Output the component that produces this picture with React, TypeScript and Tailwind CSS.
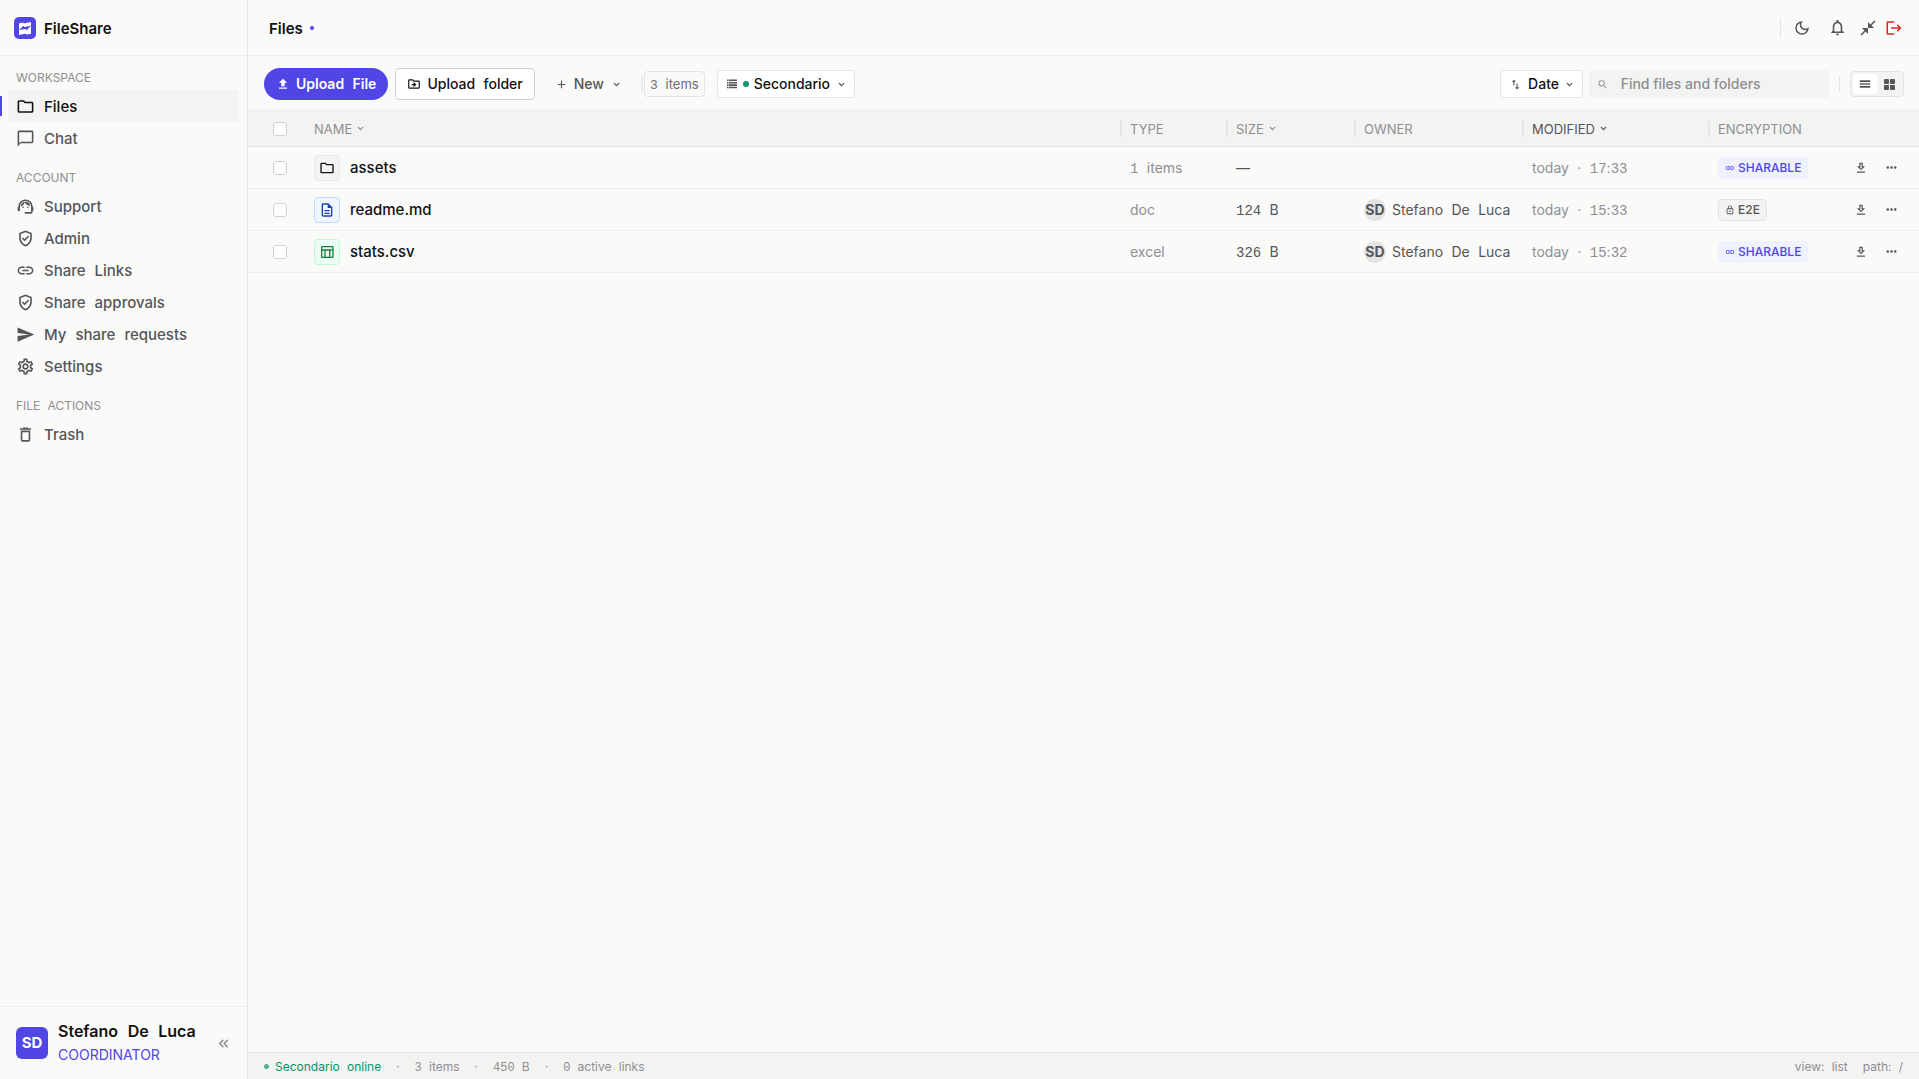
import type { ReactNode } from "react";
import { ChevronDown, ChevronsLeft } from "lucide-react";
import type { IconType } from "react-icons";
import {
  MdAdd,
  MdCloseFullscreen,
  MdDeleteOutline,
  MdImportExport,
  MdInsertLink,
  MdLogout,
  MdMenu,
  MdMoreHoriz,
  MdOutlineChatBubbleOutline,
  MdOutlineDarkMode,
  MdOutlineDescription,
  MdOutlineDriveFileMove,
  MdOutlineFolder,
  MdOutlineGetApp,
  MdOutlineGppGood,
  MdOutlineLock,
  MdOutlineNotifications,
  MdOutlineSettings,
  MdOutlineSupportAgent,
  MdOutlineTableChart,
  MdSearch,
  MdSend,
  MdUpload,
} from "react-icons/md";

// Digits and spaces are set in the mono face, letters in the sans one.
const Mixed = ({ text }: { text: string }) => (
  <span className="whitespace-pre">
    {text.split(/([\d ]+)/).map((part, i) =>
      i % 2 ? (
        <span key={i} className="font-['Liberation_Mono'] leading-none">
          {part}
        </span>
      ) : (
        part
      )
    )}
  </span>
);

type NavEntry = { label: string; icon: IconType; active?: boolean };

const sections: { title: string; items: NavEntry[] }[] = [
  {
    title: "WORKSPACE",
    items: [
      { label: "Files", icon: MdOutlineFolder, active: true },
      { label: "Chat", icon: MdOutlineChatBubbleOutline },
    ],
  },
  {
    title: "ACCOUNT",
    items: [
      { label: "Support", icon: MdOutlineSupportAgent },
      { label: "Admin", icon: MdOutlineGppGood },
      { label: "Share Links", icon: MdInsertLink },
      { label: "Share approvals", icon: MdOutlineGppGood },
      { label: "My share requests", icon: MdSend },
      { label: "Settings", icon: MdOutlineSettings },
    ],
  },
  {
    title: "FILE ACTIONS",
    items: [{ label: "Trash", icon: MdDeleteOutline }],
  },
];

const files = [
  {
    name: "assets",
    icon: MdOutlineFolder,
    tile: "border-[#e8e8e6] bg-[#f3f3f2] text-[#111]",
    type: "1 items",
    size: "—",
    owner: "",
    modified: "today · 17:33",
    sharable: true,
  },
  {
    name: "readme.md",
    icon: MdOutlineDescription,
    tile: "border-[#bfdbfe] bg-[#eff6ff] text-[#1e40af]",
    type: "doc",
    size: "124 B",
    owner: "Stefano De Luca",
    modified: "today · 15:33",
    sharable: false,
  },
  {
    name: "stats.csv",
    icon: MdOutlineTableChart,
    tile: "border-[#bbf7d0] bg-[#ecfdf5] text-[#15803d]",
    type: "excel",
    size: "326 B",
    owner: "Stefano De Luca",
    modified: "today · 15:32",
    sharable: true,
  },
];

const Logo = () => (
  <svg width="22" height="22" viewBox="0 0 22 22" aria-hidden="true">
    <rect width="22" height="22" rx="5" fill="#4f46e5" />
    <path d="M5 7Q5 6 6 5.900L9.500 5.500V6.500L17 5V16.500Q17 17 16.400 17.100L12 17.500V16.500L5 18z" fill="#fff" />
    <path d="M5 12.900L9.500 8.800L10.600 10.100L17 8.700L12.600 13.300L11.400 11.900z" fill="#4f46e5" />
  </svg>
);

const Sidebar = () => (
  <aside className="flex w-[248px] shrink-0 flex-col border-r border-[#e4e4e2]">
    <div className="flex h-14 items-center gap-2 border-b border-[#ececea] px-3.5 text-[15px] leading-6 font-semibold text-[#111]">
      <Logo />
      <span className="pt-0.5">FileShare</span>
    </div>
    <nav className="flex flex-1 flex-col gap-3 pt-2.5">
      {sections.map((section) => (
        <div key={section.title}>
          <h2 className="flex h-6 items-center px-4 text-[12px] leading-4 text-[#8e8e93]">
            <Mixed text={section.title} />
          </h2>
          <ul>
            {section.items.map(({ label, icon: Icon, active }) => (
              <li key={label} className="relative px-2">
                {active && <span className="absolute top-1.5 left-0 h-5 w-0.5 bg-[#4f46e5]" />}
                <a
                  href="#"
                  className={`flex h-8 items-center gap-[9px] rounded px-2 text-[15px] leading-6 font-medium ${
                    active ? "bg-[#f3f3f2] text-[#111]" : "text-[#55555a]"
                  }`}
                >
                  <Icon size={19} />
                  <span className="pt-0.5">
                    <Mixed text={label} />
                  </span>
                </a>
              </li>
            ))}
          </ul>
        </div>
      ))}
    </nav>
    <div className="flex h-[73px] items-center gap-2.5 border-t border-[#ececea] px-4">
      <span className="flex size-8 items-center justify-center rounded-md bg-[#4f46e5] text-[15px] font-bold text-white">
        SD
      </span>
      <div className="flex-1">
        <p className="text-[16px] leading-6 font-semibold text-[#111]">
          <Mixed text="Stefano De Luca" />
        </p>
        <p className="text-[14px] leading-6 text-[#4f46e5]">COORDINATOR</p>
      </div>
      <button aria-label="Collapse sidebar" className="text-[#8e8e93]">
        <ChevronsLeft size={15} strokeWidth={2.5} />
      </button>
    </div>
  </aside>
);

const Header = () => (
  <header className="flex h-14 shrink-0 items-center border-b border-[#ececea] pr-4 pl-[21px]">
    <h1 className="pt-0.5 text-[15px] leading-6 font-semibold text-[#111]">Files</h1>
    <span className="ml-[7px] size-1 rounded-full bg-[#4f46e5]" />
    <div className="ml-auto flex items-center text-[#55555a]">
      <span className="mr-3 h-5 w-px bg-[#e4e4e2]" />
      <button aria-label="Dark mode" className="mr-[17px]">
        <MdOutlineDarkMode size={18} />
      </button>
      <button aria-label="Notifications" className="mr-3">
        <MdOutlineNotifications size={19} />
      </button>
      <button aria-label="Compact layout" className="mr-2">
        <MdCloseFullscreen size={18} />
      </button>
      <button aria-label="Log out" className="text-[#dc2626]">
        <MdLogout size={18} />
      </button>
    </div>
  </header>
);

const Chevron = ({ className }: { className?: string }) => (
  <ChevronDown size={9} strokeWidth={3.5} className={className} />
);

const Toolbar = () => (
  <div className="flex h-[54px] shrink-0 items-center pt-0.5 pr-[15px] pl-4 text-[14px] leading-5 font-medium text-[#111]">
    <button className="flex h-8 items-center gap-1.5 rounded-full bg-[#4f46e5] px-3 font-semibold text-white">
      <MdUpload size={14} />
      <Mixed text="Upload File" />
    </button>
    <button className="ml-[7px] flex h-8 items-center gap-1.5 rounded border border-[#d0d0ce] bg-white px-[11px]">
      <MdOutlineDriveFileMove size={14} />
      <Mixed text="Upload folder" />
    </button>
    <button className="ml-5 flex h-8 items-center gap-1.5 text-[#55555a]">
      <MdAdd size={13} />
      New
      <Chevron className="ml-0.5" />
    </button>
    <span className="ml-5 h-4 w-0.5 bg-[#ececea]" />
    <span className="ml-px flex h-[26px] items-center rounded border border-[#e4e4e2] px-[5px] text-[13px] font-normal text-[#6e6e73]">
      <Mixed text="3 items" />
    </span>
    <button className="ml-3 flex h-7 items-center gap-[5px] rounded border border-[#e4e4e2] bg-white px-2">
      <svg width="12" height="12" viewBox="0 0 12 12" fill="#55555a">
        <path d="M1 1.500h1.500v1.600H1zM3 1.500h8v1.600H3zM1 3.900h1.500v1.600H1zM3 3.900h8v1.600H3zM1 6.300h1.500v1.600H1zM3 6.300h8v1.600H3zM1 8.700h1.500v1.600H1zM3 8.700h8v1.600H3z" />
      </svg>
      <span className="size-1.5 rounded-full bg-[#059669]" />
      Secondario
      <Chevron className="ml-0.5 text-[#55555a]" />
    </button>
    <button className="ml-auto flex h-7 items-center gap-1.5 rounded border border-[#e4e4e2] bg-white px-2">
      <MdImportExport size={13} className="text-[#55555a]" />
      Date
      <Chevron className="text-[#55555a]" />
    </button>
    <label className="ml-1.5 flex h-7 w-60 items-center gap-3 rounded bg-[#f3f3f2] px-2 text-[#8e8e93]">
      <MdSearch size={13} />
      <input
        type="search"
        aria-label="Find files and folders"
        placeholder="Find files and folders"
        className="w-full bg-transparent outline-none placeholder:text-[#8e8e93]"
      />
    </label>
    <span className="mx-2.5 h-4 w-px bg-[#e4e4e2]" />
    <div className="flex items-center rounded border border-[#e4e4e2] bg-[#f3f3f2] p-0.5">
      <button
        aria-label="List view"
        className="flex h-5 w-6 items-center justify-center rounded-sm bg-white text-[#111]"
      >
        <MdMenu size={14} />
      </button>
      <button aria-label="Grid view" className="flex h-5 w-6 items-center justify-center text-[#55555a]">
        <svg width="11" height="11" viewBox="0 0 11 11" fill="currentColor">
          <rect width="5" height="5" rx="1" />
          <rect x="6" width="5" height="5" rx="1" />
          <rect y="6" width="5" height="5" rx="1" />
          <rect x="6" y="6" width="5" height="5" rx="1" />
        </svg>
      </button>
    </div>
  </div>
);

const HeadCell = ({ children, sort, dark }: { children: ReactNode; sort?: boolean; dark?: boolean }) => (
  <th className={`p-0 text-left font-normal ${dark ? "text-[#55555a]" : ""}`}>
    <div className="flex items-center">
      <span className="mr-2 h-4 w-0.5 bg-[#e4e4e2]" />
      {children}
      {sort && <Chevron className="ml-1" />}
    </div>
  </th>
);

const Checkbox = ({ label }: { label: string }) => (
  <input
    type="checkbox"
    aria-label={label}
    className="ml-[25px] block size-3.5 appearance-none rounded-[3px] border border-[#d0d0ce] bg-white"
  />
);

const FileTable = () => (
  <table className="w-full table-fixed border-collapse border-t border-[#ececea]">
    <colgroup>
      <col className="w-[66px]" />
      <col />
      <col className="w-[106px]" />
      <col className="w-32" />
      <col className="w-[168px]" />
      <col className="w-[186px]" />
      <col className="w-[132px]" />
      <col className="w-[79px]" />
    </colgroup>
    <thead>
      <tr className="h-9 border-b border-[#e4e4e2] bg-[#f3f3f2] text-[13px] leading-5 text-[#8e8e93]">
        <th className="p-0">
          <Checkbox label="Select all" />
        </th>
        <th className="p-0 text-left font-normal">
          <div className="flex items-center">
            NAME
            <Chevron className="ml-1" />
          </div>
        </th>
        <HeadCell>TYPE</HeadCell>
        <HeadCell sort>SIZE</HeadCell>
        <HeadCell>OWNER</HeadCell>
        <HeadCell sort dark>
          MODIFIED
        </HeadCell>
        <HeadCell>ENCRYPTION</HeadCell>
        <th className="p-0" />
      </tr>
    </thead>
    <tbody>
      {files.map(({ icon: Icon, ...file }) => (
        <tr key={file.name} className="h-[42px] border-b border-[#ececea] text-[14px] leading-5 text-[#8e8e93]">
          <td className="p-0">
            <Checkbox label={`Select ${file.name}`} />
          </td>
          <td className="p-0">
            <div className="flex items-center gap-2.5 text-[15px] font-medium text-[#111]">
              <span className={`flex size-[26px] items-center justify-center rounded border ${file.tile}`}>
                <Icon size={16} />
              </span>
              <span className="pt-px">{file.name}</span>
            </div>
          </td>
          <td className="p-0 pl-2.5">
            <Mixed text={file.type} />
          </td>
          <td className="p-0 pl-2.5 text-[#55555a]">
            <Mixed text={file.size} />
          </td>
          <td className="p-0 pl-2.5 text-[#55555a]">
            {file.owner && (
              <div className="flex items-center gap-1.5">
                <span className="flex size-[22px] items-center justify-center rounded-full bg-[#e4e4e2] font-bold">
                  SD
                </span>
                <Mixed text={file.owner} />
              </div>
            )}
          </td>
          <td className="p-0 pl-2.5">
            <Mixed text={file.modified} />
          </td>
          <td className="p-0 pl-2.5">
            <span
              className={`inline-flex h-[22px] items-center gap-[3px] rounded-sm border px-1.5 align-middle text-[12px] font-medium ${
                file.sharable
                  ? "border-[#eef2ff] bg-[#eef2ff] text-[#4f46e5]"
                  : "border-[#e4e4e2] bg-[#f3f3f2] text-[#55555a]"
              }`}
            >
              {file.sharable ? <MdInsertLink size={10} /> : <MdOutlineLock size={10} />}
              {file.sharable ? "SHARABLE" : "E2E"}
            </span>
          </td>
          <td className="p-0">
            <div className="flex items-center gap-4 pl-3.5 text-[#55555a]">
              <button aria-label={`Download ${file.name}`}>
                <MdOutlineGetApp size={14} />
              </button>
              <button aria-label={`More actions for ${file.name}`}>
                <MdMoreHoriz size={15} />
              </button>
            </div>
          </td>
        </tr>
      ))}
    </tbody>
  </table>
);

const StatusBar = () => (
  <footer className="flex h-[27px] shrink-0 items-center border-t border-[#e4e4e2] bg-[#f3f3f2] px-4 pt-px text-[12px] leading-4 text-[#8e8e93]">
    <span className="mr-1.5 size-[5px] rounded-full bg-[#059669]/70" />
    <span className="text-[#059669]">
      <Mixed text="Secondario online" />
    </span>
    <span className="mx-[15px]">·</span>
    <Mixed text="3 items" />
    <span className="mx-[15px]">·</span>
    <Mixed text="450 B" />
    <span className="mx-[15px]">·</span>
    <Mixed text="0 active links" />
    <span className="mr-[15px] ml-auto">
      <Mixed text="view: list" />
    </span>
    <Mixed text="path: /" />
  </footer>
);

const App = () => {
  return (
    <div className="flex min-h-screen bg-[#fafaf9] font-[Inter,'Liberation_Sans',sans-serif]">
      <Sidebar />
      <main className="flex min-w-0 flex-1 flex-col">
        <Header />
        <Toolbar />
        <div className="flex-1">
          <FileTable />
        </div>
        <StatusBar />
      </main>
    </div>
  );
};

export default App;
